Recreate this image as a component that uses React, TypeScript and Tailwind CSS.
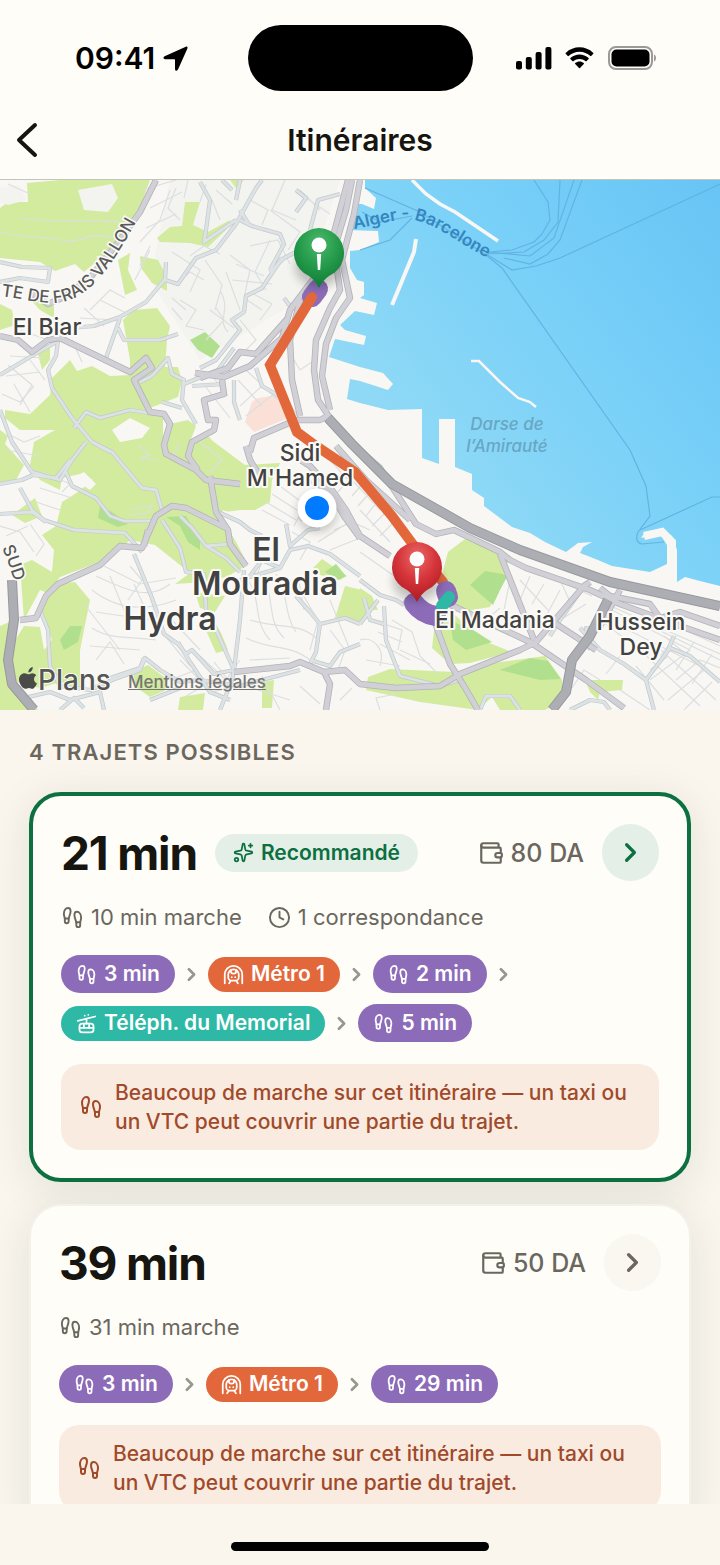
import { Fragment } from 'react'
import {
  CableCar,
  ChevronRight,
  Clock,
  Footprints,
  Sparkles,
  TrainFrontTunnel,
  Wallet,
} from 'lucide-react'

type Mode = 'walk' | 'metro' | 'cable'

interface Leg {
  mode: Mode
  label: string
}

interface Trip {
  duration: string
  price: string
  walk: string
  transfers?: string
  recommended?: boolean
  legs: Leg[]
}

const TRIPS: Trip[] = [
  {
    duration: '21 min',
    price: '80 DA',
    walk: '10 min marche',
    transfers: '1 correspondance',
    recommended: true,
    legs: [
      { mode: 'walk', label: '3 min' },
      { mode: 'metro', label: 'Métro 1' },
      { mode: 'walk', label: '2 min' },
      { mode: 'cable', label: 'Téléph. du Memorial' },
      { mode: 'walk', label: '5 min' },
    ],
  },
  {
    duration: '39 min',
    price: '50 DA',
    walk: '31 min marche',
    legs: [
      { mode: 'walk', label: '3 min' },
      { mode: 'metro', label: 'Métro 1' },
      { mode: 'walk', label: '29 min' },
    ],
  },
]

const MODES = {
  walk: { Icon: Footprints, chip: 'h-[38px] bg-[#8c6cb8]' },
  metro: { Icon: TrainFrontTunnel, chip: 'h-[35px] bg-[#e2683c]' },
  cable: { Icon: CableCar, chip: 'h-[35px] bg-[#2eb8a6]' },
}

const SEA =
  'M365 0V8L376 18L374 29L362 24L354 24L347 50L378 51L379 62L360 70L350 71V88L357 100L364 102V115L360 118L377 123L374 135L355 131L340 145L345 150L366 156L364 165L335 159L329 177L360 187L383 193L393 204L388 210L360 201L350 199L347 219L360 223L388 230L422 229V278L439 284V239H455V287L472 294V310L484 318V326L500 338L512 347L530 353L545 362L566 372L578 363L592 362L583 367L580 373L598 380L612 386L650 392L667 384V365L660 354L641 358L645 352L660 349L672 356L677 370V402L685 397L700 401L720 406V0Z'

const PARKS = [
  'M27 3L60 0H150L140 28L128 48L108 72L84 92L75 84L55 91L40 82L0 78V28L8 22L28 22Z',
  'M185 22H200L193 45L208 52L230 40L226 50L208 67L190 63L160 62L157 58L170 47L182 46Z',
  'M118 80L130 73L128 90L137 110L125 115Z',
  'M140 76L158 80L167 97V111L152 103L141 88Z',
  'M230 0H244L236 8Z',
  'M30 119L54 126V138L40 130Z',
  'M0 124L12 130L15 145L0 150Z',
  'M37 170L50 168V180L42 190Z',
  'M123 140L133 130L157 128L170 146L167 160L165 187L178 187L182 201L178 217L150 228L130 205V180Z',
  'M52 198L60 190L70 180L77 191L92 186L110 196L130 195L148 229L163 235V256L170 244L188 240L196 246L190 262L208 256L214 262L245 285L280 283L272 300L270 322L255 330H240L218 333L235 360L248 385L226 397L205 402L175 404L190 393L155 365L130 360L110 378L60 397L48 413L40 410L24 440L20 385L32 380L52 392L54 370L42 355L56 346L62 322L78 312L93 300L80 294L62 298L60 310L40 300L30 285L34 262L55 250L20 250L5 238V230L30 234L50 215Z',
  'M0 250L8 256L5 264L24 285L15 302L0 304Z',
  'M50 405L75 402L90 420L84 450L80 470V508L60 502L40 508L10 500L14 462L24 446L40 447L44 470L52 460L40 425Z',
  'M0 446L14 440L12 480L18 506L38 530H0Z',
  'M12 335L35 318L42 336L25 343Z',
  'M133 492L148 485L168 500L164 511L150 517L136 507Z',
  'M180 517L205 513L203 530H178Z',
  'M215 442L222 455L228 470L216 473L205 448Z',
  'M313 388L322 379L347 396L340 400L320 395Z',
  'M335 438L345 406L362 410L372 430L358 443Z',
  'M195 412L225 416L215 432L200 428Z',
  'M262 502L274 500L272 528H262Z',
  'M448 372L465 359L502 374L508 381L500 405L490 427L460 432L440 402Z',
  'M435 443L455 435L482 460L512 472L470 483L450 484L432 468Z',
  'M368 497L390 489L455 492L500 482L545 476L562 500V520L545 530H500L492 517L478 530L420 522L366 510Z',
  'M585 500H623L622 510L600 512L598 520L590 512Z',
  'M360 408L372 416L378 430L360 430Z',
]

const WOODS = [
  'M190 160L205 152L220 166L212 178L198 170Z',
  'M100 326L112 332L128 344L118 347L98 338Z',
  'M166 337L186 336L200 360L200 370L188 362L180 346Z',
  'M60 460L70 446L82 446L78 462L64 470Z',
  'M470 405L485 391L508 395L500 410L493 425Z',
  'M450 441L470 448L492 462L466 470L453 460Z',
  'M500 490L530 478L548 481L561 499L540 500Z',
  'M325 392L336 384L346 396L338 400Z',
]

const LANES = [
  'M8 4L30 14M0 52C30 60 40 55 60 60S90 50 112 58M20 38C50 44 80 38 120 42M170 10L160 40L140 62M150 70L135 100M172 72L200 90L190 112',
  'M205 80L222 105L215 130M230 75L250 90L244 118L262 130M270 60L255 92L266 110M180 120L196 130L186 146L204 150M220 110C232 130 216 140 228 152',
  'M100 120L130 135M90 130L110 110L125 118M20 150L48 160L70 156M8 185L32 205L20 225M30 180L45 200M72 160L82 182',
  'M84 128L104 146M80 138L116 140M142 10L176 0M150 28L182 12M146 48L176 34M140 86L150 66M176 8L168 28L180 40M188 0L184 18M206 4L200 22M216 10L232 24M220 40L212 20',
  'M285 215L300 240M240 140L256 160L244 172M285 0L272 30L296 40M300 10L320 30M306 18L330 34M250 20L268 30L262 45',
  'M236 84L264 96M232 100L272 104M226 92L240 130M250 112L272 124L260 140M210 130L234 148M176 104L190 92L204 100M172 118L186 130M190 76L204 66L220 74M182 140L172 128M206 160L224 140L216 128',
  'M42 292L70 304L62 312M40 308L72 318M36 322L60 330M104 386L140 404L176 398M96 396C130 412 150 420 170 404M92 410C120 432 150 430 176 420M96 432L150 440M92 448C110 460 130 456 156 460M90 466L140 470M96 480L110 462L124 484',
  'M130 386L142 400L128 420M172 440L200 470M162 452L190 486M200 476L226 500L240 480M214 482L236 510M180 480L212 512L240 505',
  'M0 346L20 352L34 372M6 356L28 346M30 344L44 364L36 376M2 214L20 222L34 206M10 176L44 178M6 196L40 192M14 204L30 232M84 424L120 470M110 396L128 440M134 404L150 440M170 500L196 490M186 516L214 500',
  'M248 400C262 420 252 440 270 460M262 396C276 420 266 440 284 458M276 394C288 410 284 436 296 452M250 440C280 450 300 440 320 462M246 458C270 470 290 464 310 480M300 410L318 440L310 470M330 450L345 470L338 490',
  'M262 330L290 345M266 322L296 340M272 314L300 332M280 306L312 330M294 346L318 300M306 352L334 322M318 362L346 344M330 370L360 358',
  'M250 480L290 478M252 508L290 520M300 506L320 524M262 496L280 530M330 420L350 470M298 396L304 430M264 376L256 398M292 352L310 362L300 380M334 350L352 342L370 350',
  'M330 280L348 300L338 312M345 275L372 305M352 300L380 330M372 318L396 345M360 330L390 362M346 340L380 372M360 372L400 400',
  'M364 302L352 316M372 310L358 326M380 318L366 336M388 330L372 346M396 340L380 356M348 290L338 302',
  'M372 440L402 450L398 470M378 452L402 462M380 464L410 480M360 460C372 456 386 468 380 486M392 440L412 452L420 476L436 492M400 470L430 484M366 480L400 486',
  'M520 400L548 430M530 396L520 420M544 404L532 424M560 410L544 440M540 392L592 416M510 400L504 430M560 440L586 424M600 440L640 470M612 430L690 470M620 446L700 486M606 424L720 474',
  'M640 470L700 526M652 462L716 520M664 456L720 502M676 500L700 480L720 488M650 500L690 470M668 520L704 490M684 530L712 502M650 490L668 476M636 486L664 520M620 510L650 530',
  'M630 436L720 480M640 430L720 466M660 476L676 456M676 490L694 462M692 504L712 474M572 508L584 490L600 500M620 476L606 494M486 440L500 428M560 400L572 426',
  'M288 170L300 190L318 178M238 200L262 226M246 190L278 220M240 226L262 206M246 236L276 212M205 206L230 238M212 196L228 216M270 30L300 52L288 70M250 66L278 60L290 84',
  'M10 255L24 262L40 256M5 270L40 276M200 262L222 280L210 292M180 262L172 280M138 265L150 275L140 278L158 280M130 330L152 325L148 333L130 335M340 520L352 508M380 530L376 518L396 514',
]

const STREETS = [
  'M0 82L22 87L50 88L48 102L20 98L0 102',
  'M0 195L35 174L60 160',
  'M58 160L56 176L48 190L52 208L72 238L92 262L110 272',
  'M0 230L12 262L32 292L60 300L72 280L86 262',
  'M0 304L22 300L33 295L56 298L70 280M20 308L32 330L44 340L74 350L125 353L142 372M0 334L32 332L46 342',
  'M66 292L72 306L96 318L110 336L124 341L158 341M92 262L112 272L142 308L156 310L162 330',
  'M74 248L86 232L100 238L130 230L150 233',
  'M166 82L165 100L178 104L196 78L216 70L236 44L256 8L262 0M166 98L146 122L120 137L94 146L70 148M120 138L106 178M118 148L124 160L160 160L178 154M140 202L152 196L168 178L172 194L184 200M184 198L182 220L196 244M162 222L182 228',
  'M240 40L252 46L280 54L284 64L270 90M200 2L210 20L206 50L204 62L236 40M282 78L262 108L246 116L244 132L232 140L240 150L216 180L200 188M240 30L250 46',
  'M184 204L218 190L234 168M192 206L224 204M234 200L234 222L240 240',
  'M256 188L262 206L286 220M284 118L290 126L300 120M270 92L284 78L300 70M296 10L306 18L296 32M310 50L318 20L340 14',
  'M162 340L180 368L186 392L204 394L206 430M180 336L192 348L206 366L226 378L240 392M206 366L230 364M218 332L240 342L250 350L262 356M206 366L190 345',
  'M134 374L152 418L164 454L178 464L186 474L192 470L214 494L234 490L216 450L206 430M178 462L190 482L210 512L230 520M244 390L240 440L234 490L232 500L220 530',
  'M40 430L48 450L50 486L60 506L90 510L112 500L140 490L145 478L160 490L180 502L200 500L240 506L262 500L300 490',
  'M24 518L50 512L70 520L100 512L104 530M144 478L140 488L110 498M150 520L180 508M60 530L74 518L84 528',
  'M250 396L262 380L280 388L290 370L308 366L330 374L360 396M240 400L280 388M296 416L310 432L320 444L316 472L308 488M320 444L345 438L360 444M310 480L330 486L340 472L360 464',
  'M360 400L380 415L396 420L404 425M384 426L386 460L400 496L440 506L460 500M360 444L378 420M364 418L370 440L384 444',
  'M550 456L560 440L580 412M580 448L600 470L624 484L646 500L654 530M646 500L670 468L690 476L720 502M668 470L674 456M590 470L586 448L600 450',
  'M480 530L486 516L510 516L520 530M570 530L590 520L604 522L610 530',
  'M300 340L330 320M286 344L290 366L308 350L320 348M236 20L240 0M232 10L222 0',
]

const ROADS = [
  'M156 0L140 32L120 60L90 98L62 118L48 124L30 112M0 156L18 160L32 172L48 160L60 158L130 192L146 178L152 188L134 200L150 232L164 234L170 244L164 265L166 274L196 290L206 300L240 304',
  'M195 193L224 197L250 186L282 158L290 130L320 90L332 60L348 0M200 198L228 188L240 172L256 174L288 138M222 200L224 214L204 220L208 240L216 240L214 250L192 262L188 276L198 290M250 272L254 258L296 240L320 240L328 236',
  'M352 0L346 30L334 70L340 110L330 128L316 160L314 190L318 220L330 238M360 0L354 34L342 80L350 118L336 138L326 164L322 196L330 230M300 120L290 160L292 200L300 236',
  'M210 296L216 332L228 350L230 364L246 386M20 440L36 438L46 416L58 404L100 385L120 366L142 368L156 336L172 326L186 328L226 348M144 366L148 350',
  'M246 266L250 280L262 300M294 276L310 286L332 310L346 330L360 356L390 376M312 300L330 312L344 336L360 358',
  'M234 492L290 486L300 482L324 492L345 490L360 504L396 508L440 506L460 494L520 470L536 462L584 406L590 402M324 492L330 504L326 530',
  'M328 236L350 262L380 288L416 344L436 354L454 350L500 372L510 380L526 388L590 410L620 424L680 446L720 460',
  'M404 420L434 440L450 484L464 506L478 530M440 420L470 434L530 462L586 500L624 528M500 374L534 460M620 410L598 450',
  'M600 408L610 416L650 424L660 438L680 432L720 446M550 440L596 470M336 266L366 300L410 340',
]

const HIGHWAYS = [
  'M12 400L14 440L8 480L12 504L34 530',
  'M328 238L352 264L392 304L470 348L520 370L610 402L720 426',
  'M608 420L590 456L572 480L566 512L552 530',
]

const FERRIES = [
  'M365 8L420 32L486 75L502 88L630 270L646 306L650 336L638 352Q634 362 642 364L664 362M640 350L712 317H720',
  'M360 70L390 60L412 38M362 32L380 42L412 36M534 0L548 22L550 40L542 54L534 62L512 70L490 72M560 0L558 42L544 60L524 72L486 74M574 0L554 58L530 76L488 72M582 0L560 60L548 74L530 84L504 78M486 74L512 90L536 86L560 78L720 4',
]

function CityMap() {
  return (
    <svg
      viewBox="0 0 720 530"
      preserveAspectRatio="xMidYMid slice"
      className="block h-full w-full font-['Inter',sans-serif]"
      role="img"
      aria-label="Carte du trajet"
    >
      <defs>
        <linearGradient id="sea" x1="0" y1="0.8" x2="1" y2="0">
          <stop offset="0.2" stopColor="#8fd9f6" />
          <stop offset="0.6" stopColor="#78d0f8" />
          <stop offset="1" stopColor="#68c4f5" />
        </linearGradient>
        <radialGradient id="pinGreen" cx="0.5" cy="0.25" r="0.75">
          <stop offset="0" stopColor="#4cb86b" />
          <stop offset="0.5" stopColor="#259c4b" />
          <stop offset="1" stopColor="#0f7a36" />
        </radialGradient>
        <radialGradient id="pinRed" cx="0.5" cy="0.25" r="0.75">
          <stop offset="0" stopColor="#ea6a66" />
          <stop offset="0.5" stopColor="#d5353a" />
          <stop offset="1" stopColor="#ae1a22" />
        </radialGradient>
        <filter id="soft" x="-50%" y="-50%" width="200%" height="200%">
          <feGaussianBlur stdDeviation="5" />
        </filter>
        <path id="vallon" d="M1 116C30 119 55 130 78 116C104 100 118 74 144 28" />
        <path id="barcelone" d="M354 49C380 45 395 38 414 40C440 45 460 66 496 82" />
        <path id="sud" d="M2 368C6 376 10 388 18 412" />
      </defs>

      <rect width="720" height="530" fill="#f8f7f3" />
      <path d="M170 0H340L300 120L200 180L150 100Z" fill="#f3f3f0" />
      <path d={SEA} fill="url(#sea)" />
      <g fill="none" stroke="#62b3e2" strokeWidth="1.2">
        {FERRIES.map((d) => <path key={d} d={d} />)}
      </g>
      <g fill="none" stroke="#f8f7f3" strokeWidth="3.5">
        <path d="M412 0L426 14L440 24L455 32L498 61" />
        <path d="M416 59L414 72L392 125" strokeWidth="4" />
        <path d="M471 181H479L500 202L518 218L530 222L536 227" strokeWidth="2.5" />
        <path d="M644 356L662 352L672 362V400" strokeWidth="8" />
      </g>

      <g fill="#d2eb9f">{PARKS.map((d) => <path key={d} d={d} />)}</g>
      <path d="M78 10L112 4L118 18L108 32L84 30ZM0 8L18 5L27 20L8 25L0 22Z" fill="#f3f3ef" />
      <path d="M112 250L130 238L150 248L142 258L120 262ZM72 298L84 292L96 304L90 310ZM222 330L240 335L250 350L232 352Z" fill="#f8f7f3" />
      <g fill="#b0e08e">{WOODS.map((d) => <path key={d} d={d} />)}</g>
      <path d="M252 222L258 218L278 215L288 238L254 252L245 242Z" fill="#fae0d6" />

      <g fill="none" stroke="#dcdfe0" strokeWidth="1.2">
        {LANES.map((d) => <path key={d} d={d} />)}
      </g>
      <g fill="none" strokeLinejoin="round">
        <g stroke="#c3c9cd" strokeWidth="4.2">{STREETS.map((d) => <path key={d} d={d} />)}</g>
        <g stroke="#dde2e4" strokeWidth="2.8">{STREETS.map((d) => <path key={d} d={d} />)}</g>
        <g stroke="#b2b3b9" strokeWidth="6.4">{ROADS.map((d) => <path key={d} d={d} />)}</g>
        <g stroke="#d0d0d6" strokeWidth="4.8">{ROADS.map((d) => <path key={d} d={d} />)}</g>
        <g stroke="#97999e" strokeWidth="10">{HIGHWAYS.map((d) => <path key={d} d={d} />)}</g>
        <g stroke="#adaeb3" strokeWidth="8">{HIGHWAYS.map((d) => <path key={d} d={d} />)}</g>
      </g>

      {/* Route */}
      <g fill="none" strokeLinecap="round" strokeLinejoin="round">
        <path d="M318 109L312 117" stroke="#8c6cb8" strokeWidth="20" />
        <path d="M312 117L270 185L297 252L316 266L355 292L392 336L417 370L443 402" stroke="#e2683c" strokeWidth="10" strokeLinejoin="miter" />
        <path d="M446 411L448 417M414 423Q422 434 436 436" stroke="#8c6cb8" strokeWidth="20" />
        <path d="M449 417L442 426" stroke="#2eb8a6" strokeWidth="12" />
      </g>

      {/* Place names */}
      <g fill="#424242" stroke="#fbfaf7" strokeWidth="4" strokeLinejoin="round" paintOrder="stroke" fontWeight="600" textAnchor="middle">
        <g fontSize="23" fontWeight="500">
          <text x="47" y="155">El Biar</text>
          <text x="300" y="281">Sidi</text>
          <text x="300" y="306">M'Hamed</text>
          <text x="495" y="448">El Madania</text>
          <text x="641" y="450">Hussein</text>
          <text x="641" y="475">Dey</text>
        </g>
        <g fontSize="32">
          <text>
            <tspan x="266" y="381">El</tspan>
            <tspan x="265" y="415">Mouradia</tspan>
          </text>
          <text x="170" y="450">Hydra</text>
        </g>
      </g>
      <g fontSize="17" fontWeight="500">
        <g fill="#5a5a5a" stroke="#fbfaf7" strokeWidth="3" paintOrder="stroke">
          <text><textPath href="#vallon">TE DE FRAIS VALLON</textPath></text>
          <text><textPath href="#sud">SUD</textPath></text>
        </g>
        <text fill="#3486bf" fontWeight="600"><textPath href="#barcelone">Alger - Barcelone</textPath></text>
        <g fill="#68a6c4" fontStyle="italic" textAnchor="middle">
          <text x="507" y="250">Darse de</text>
          <text x="507" y="272">l’Amirauté</text>
        </g>
      </g>

      {/* User location */}
      <circle cx="317" cy="332" r="20" fill="#000" opacity="0.2" filter="url(#soft)" />
      <circle cx="317" cy="328" r="19.5" fill="#fff" />
      <circle cx="317" cy="328" r="12" fill="#007aff" />

      {/* Pins */}
      <Pin x={319} y={73} fill="url(#pinGreen)" />
      <Pin x={417} y={387} fill="url(#pinRed)" />

      {/* Maps logo */}
      <path
        transform="translate(19 487) scale(0.84)"
        fill="#4a4a48"
        d="M15.900 7.300c1.700 0 3.600.9 4.700 2.500-4 2.300-3.400 8.100.8 9.600-.9 2.500-3.200 6.600-5.400 6.600-1.600 0-2.200-1-4.100-1-2 0-2.600 1-4.200 1C4.500 26 0 20 0 15c0-5.100 3.400-7.700 6.600-7.700 2 0 3.600 1.300 4.800 1.300 1.200 0 2.800-1.300 4.500-1.300ZM11.200 6.600C11 3.700 13.300.6 16.300.1c.4 3.200-2 6.400-5.100 6.500Z"
      />
      <text x="38" y="510" fontSize="28" fontWeight="500" fill="#565654" stroke="#fbfaf7" strokeWidth="2" paintOrder="stroke">Plans</text>
    </svg>
  )
}

function Pin({ x, y, fill }: { x: number; y: number; fill: string }) {
  return (
    <g transform={`translate(${x} ${y})`}>
      <ellipse cx="0" cy="14" rx="24" ry="20" fill="#000" opacity="0.22" filter="url(#soft)" />
      <path d="M0 35Q-4 27-10 23A25 25 0 1 1 10 23Q4 27 0 35Z" fill={fill} />
      <circle cx="0" cy="-8" r="7.500" fill="#fff" />
      <path d="M-2.200 1H2.200L1.200 17H-1.200Z" fill="#fff" />
    </g>
  )
}

function StatusBar() {
  return (
    <div className="grid h-[100px] grid-cols-[1fr_auto_1fr] items-center pt-4 text-black">
      <div className="flex items-center gap-2 pl-[75px]">
        <span className="text-[30px] font-semibold leading-9">09:41</span>
        <svg width="25" height="25" viewBox="0 0 25 25" fill="currentColor">
          <path d="M22.800.7 1.600 10.200c-1.800.8-1.300 3 .6 3h9.300c.3 0 .5.200.5.500V23c0 2 2.200 2.400 3 .6L24.400 2.400c.5-1.200-.4-2.200-1.600-1.700Z" />
        </svg>
      </div>
      <div className="h-[66px] w-[225px] rounded-full bg-black" />
      <div className="flex items-center justify-end gap-3 pr-[63px]">
        <svg width="36" height="23" viewBox="0 0 36 23" fill="currentColor">
          <rect x="0" y="14" width="6" height="8.500" rx="2" />
          <rect x="9.800" y="10" width="6" height="12.500" rx="2" />
          <rect x="19.600" y="5" width="6" height="17.500" rx="2" />
          <rect x="29.400" y="0" width="6" height="22.500" rx="2" />
        </svg>
        <svg width="31" height="23" viewBox="0 0 31 23" fill="currentColor">
          <path d="M15.500 4.700c4.200 0 8 1.600 10.900 4.300.3.200.6.200.8 0l2.100-2.200c.3-.3.300-.7 0-.9C21.600-1.500 9.400-1.500 1.700 5.900c-.3.300-.3.700 0 .9L3.800 9c.2.200.6.200.8 0 2.900-2.700 6.700-4.300 10.900-4.300Z" />
          <path d="M15.500 11.900c2.300 0 4.400.8 6.100 2.300.3.200.6.200.8 0l2.200-2.200c.3-.3.300-.7 0-.9-5.100-4.700-13-4.700-18.200 0-.3.300-.3.700 0 .9l2.200 2.200c.2.200.6.200.8 0 1.700-1.500 3.800-2.300 6.100-2.300Z" />
          <path d="M19.800 17c.2-.3.200-.6 0-.9-2.500-2.100-6.100-2.100-8.600 0-.3.300-.3.600 0 .9l3.800 3.900c.3.300.7.300 1 0Z" />
        </svg>
        <svg width="50" height="24" viewBox="0 0 50 24">
          <rect x="2" y="1" width="43" height="22" rx="7" fill="none" stroke="#9c9a96" strokeWidth="2" />
          <rect x="4.500" y="3.500" width="38" height="17" rx="5" fill="#000" />
          <path d="M47 8.500v7c1.500-.6 2-2 2-3.500s-.5-2.900-2-3.500Z" fill="#9c9a96" />
        </svg>
      </div>
    </div>
  )
}

function LegChip({ leg }: { leg: Leg }) {
  const { Icon, chip } = MODES[leg.mode]
  return (
    <span className={`flex items-center gap-[7px] rounded-full px-[15px] text-[21px] font-semibold leading-6 text-white ${chip}`}>
      <Icon size={21} />
      {leg.label}
    </span>
  )
}

function TripCard({ trip }: { trip: Trip }) {
  const frame = trip.recommended ? 'border-4 border-[#0d7041]' : 'border-2 border-[#f3f1e9]'
  const go = trip.recommended ? 'bg-[#e4efe8] text-[#0d7041]' : 'bg-[#faf6f0] text-[#6b675e]'
  return (
    <article className={`rounded-[32px] bg-[#fefdf8] p-7 shadow-[0_8px_44px_rgba(20,70,45,0.10)] ${frame}`}>
      <div className="flex items-center">
        <h2 className="text-[46px] font-bold leading-[56px] tracking-tight text-[#161510]">{trip.duration}</h2>
        {trip.recommended && (
          <span className="ml-[18px] flex h-[38px] items-center gap-[7px] rounded-full bg-[#e4efe8] px-[18px] text-[21px] font-semibold leading-6 text-[#0d7041]">
            <Sparkles size={21} />
            Recommandé
          </span>
        )}
        <span className="ml-auto flex items-center gap-[7px] text-[25px] font-medium leading-8 text-[#6b675e]">
          <Wallet size={26} />
          {trip.price}
        </span>
        <button type="button" aria-label={`Voir le trajet de ${trip.duration}`} className={`ml-[18px] flex size-[57px] items-center justify-center rounded-full ${go}`}>
          <ChevronRight size={31} strokeWidth={2.5} />
        </button>
      </div>

      <div className="mt-[22px] flex items-center gap-[26px] text-[22px] leading-7 text-[#6b675e]">
        <span className="flex items-center gap-[7px]">
          <Footprints size={23} />
          {trip.walk}
        </span>
        {trip.transfers && (
          <span className="flex items-center gap-[7px]">
            <Clock size={23} />
            {trip.transfers}
          </span>
        )}
      </div>

      <div className="mt-6 flex flex-wrap items-center gap-x-[6px] gap-y-[11px]">
        {trip.legs.map((leg, i) => (
          <Fragment key={i}>
            {i > 0 && <ChevronRight size={21} strokeWidth={3} className="text-[#9a968d]" />}
            <LegChip leg={leg} />
          </Fragment>
        ))}
      </div>

      <p className="mt-[22px] flex items-center gap-3 rounded-[20px] bg-[#faebe1] px-[18px] py-[14px] text-[21px] font-medium leading-[29px] text-[#a04a2a]">
        <Footprints size={24} className="shrink-0" />
        Beaucoup de marche sur cet itinéraire — un taxi ou un VTC peut couvrir une partie du trajet.
      </p>
    </article>
  )
}

export default function App() {
  return (
    <div className="flex h-screen flex-col bg-[#faf5ed] font-['Inter',sans-serif]">
      <header className="shrink-0 border-b border-[#c4c4bf] bg-[#fefdf8]">
        <StatusBar />
        <div className="grid h-[79px] grid-cols-[1fr_auto_1fr] items-center px-4">
          <button type="button" aria-label="Retour" className="w-6">
            <svg width="22" height="36" viewBox="0 0 22 36" fill="none" stroke="#161510" strokeWidth="4" strokeLinecap="round" strokeLinejoin="round">
              <path d="M19 3 3 18l16 15" />
            </svg>
          </button>
          <h1 className="text-[30px] font-semibold leading-9 text-[#161510]">Itinéraires</h1>
        </div>
      </header>

      <div className="relative aspect-[72/53] w-full shrink-0">
        <CityMap />
        <a href="#mentions" className="absolute bottom-4 left-32 text-[17px] font-medium leading-6 text-[#757573] underline">
          Mentions légales
        </a>
      </div>

      <main className="min-h-0 flex-1 overflow-y-auto px-[29px] pt-[26px] [scrollbar-width:none]">
        <p className="text-[22px] font-semibold leading-8 tracking-wider text-[#6b675e]">4 TRAJETS POSSIBLES</p>
        <div className="mt-6 flex flex-col gap-[22px]">
          {TRIPS.map((trip) => (
            <TripCard key={trip.duration} trip={trip} />
          ))}
        </div>
      </main>

      <footer className="flex h-[61px] shrink-0 items-end justify-center pb-[14px]">
        <div className="h-[9px] w-[258px] rounded-full bg-black" />
      </footer>
    </div>
  )
}
